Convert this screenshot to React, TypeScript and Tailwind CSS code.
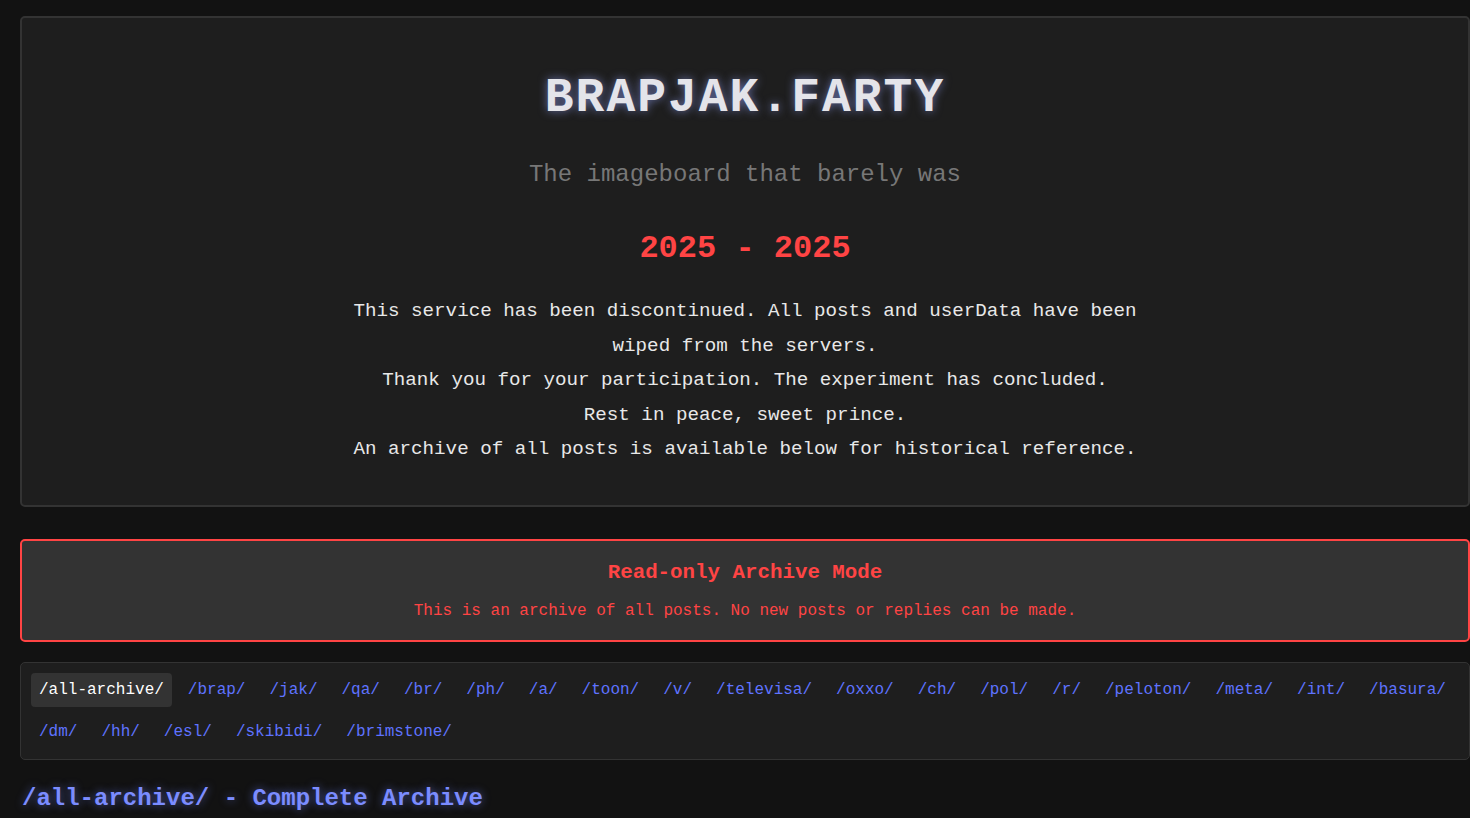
const boards = [
  'all-archive', 'brap', 'jak', 'qa', 'br', 'ph', 'a', 'toon', 'v', 'televisa', 'oxxo', 'ch', 'pol',
  'r', 'peloton', 'meta', 'int', 'basura', 'dm', 'hh', 'esl', 'skibidi', 'brimstone',
];

export default function App() {
  const current = 'all-archive';

  return (
    <div className="min-h-screen bg-[#121212] pt-4 pl-5 font-['Liberation_Mono','Courier_New',monospace] text-[#e0e0e0]">
      {/* farewell header */}
      <header className="rounded-[5px] border-2 border-[#333] bg-[#1e1e1e] px-10 pt-10 pb-[38px] text-center">
        <h1 className="mt-[13px] text-[48px] leading-[54px] font-bold tracking-[2px] text-[#e4e4ea] [text-shadow:0_0_10px_rgba(150,165,255,0.6)]">
          BRAPJAK.FARTY
        </h1>
        <p className="mt-[36px] text-[24px] leading-[28px] text-[#777]">The imageboard that barely was</p>
        <h2 className="mt-[42px] text-[32px] leading-[36px] font-bold text-[#ff4444]">2025 - 2025</h2>
        <div className="mx-auto mt-[27px] max-w-[800px] text-[19.2px] leading-[1.8] text-[#e8e8e8]">
          <p>This service has been discontinued. All posts and userData have been wiped from the servers.</p>
          <p>Thank you for your participation. The experiment has concluded.</p>
          <p>Rest in peace, sweet prince.</p>
          <p>An archive of all posts is available below for historical reference.</p>
        </div>
      </header>

      {/* archive notice */}
      <div className="mt-8 rounded-[5px] border-2 border-[#ff4444] bg-[#333] pt-5 pb-5 text-center text-[#ff4444]">
        <h3 className="text-[20.8px] leading-[24px] font-bold">Read-only Archive Mode</h3>
        <p className="mt-[17px] text-[16px] leading-[18px]">
          This is an archive of all posts. No new posts or replies can be made.
        </p>
      </div>

      {/* board list */}
      <nav className="mt-[20px] flex flex-wrap gap-2 rounded-[5px] border border-[#333] bg-[#1e1e1e] p-2.5">
        {boards.map((b) => (
          <a
            key={b}
            href="#"
            className={`rounded-[4px] p-2 text-[16px] leading-[18px] ${
              b === current ? 'bg-[#333] text-white' : 'text-[#5f73ff] hover:bg-[#2a2a2a]'
            }`}
          >
            /{b}/
          </a>
        ))}
      </nav>

      <h2 className="mt-[25px] pl-[2px] text-[24px] leading-[27px] font-bold text-[#7b8cff] [text-shadow:0_0_8px_rgba(110,130,255,0.6)]">
        /all-archive/ - Complete Archive
      </h2>
    </div>
  );
}
